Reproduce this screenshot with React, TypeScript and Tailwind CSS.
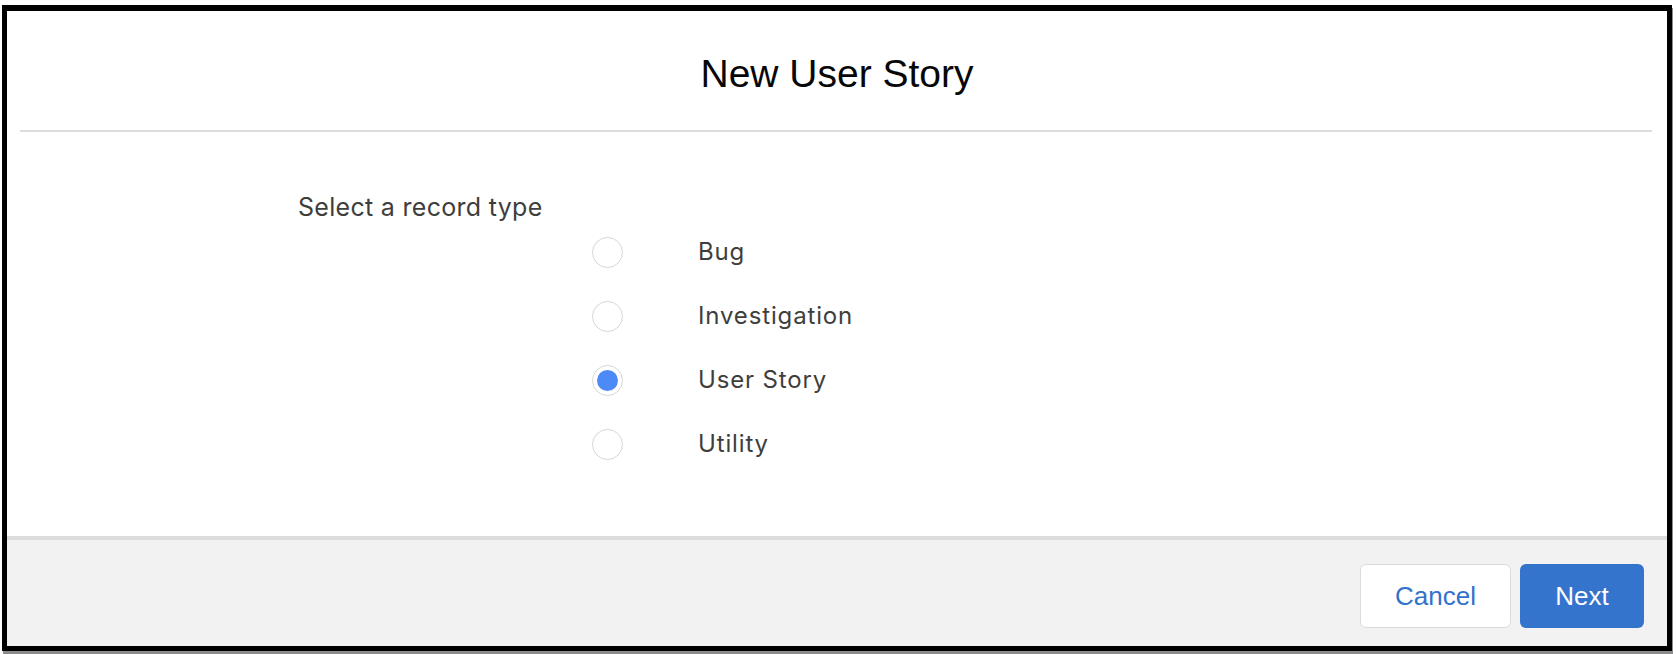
import React from "react";

const options = [
  { label: "Bug", checked: false },
  { label: "Investigation", checked: false },
  { label: "User Story", checked: true },
  { label: "Utility", checked: false },
];

export default function App() {
  return (
    <div className="w-[1676px] h-[654px] bg-white overflow-hidden">
      <div className="ml-[2px] mt-[5px] w-[1670px] h-[646px] border-black border-l-[5px] border-r-[5px] border-t-[6px] border-b-[5px] flex flex-col bg-white shadow-[1px_3px_0_#8c8c8c]">
        {/* Header */}
        <div className="pt-[41px] pb-[34px] flex justify-center">
          <h1 className="text-[39px] leading-[44px] text-[#080707] font-['Liberation_Sans',Arial,sans-serif] font-normal">
            New User Story
          </h1>
        </div>
        <div className="ml-[13px] mr-[15px] h-[2px] bg-[#dcdcdc]" />

        {/* Body */}
        <div className="flex-1 pl-[291px] pt-[63px] font-['Inter','Liberation_Sans',sans-serif] text-[#3e3e3c]">
          <div className="text-[25px] leading-[24px] tracking-[0.3px]">Select a record type</div>
          <div className="mt-[1px] ml-[294px] flex flex-col">
            {options.map((o) => (
              <label key={o.label} className="h-[64px] flex items-center">
                <span className="w-[31px] h-[31px] rounded-full border-[1.5px] border-[#d6d6d6] bg-white flex items-center justify-center shrink-0">
                  {o.checked && <span className="w-[21px] h-[21px] rounded-full bg-[#4d8af5]" />}
                </span>
                <span className="ml-[75px] text-[24px] leading-[30px] tracking-[0.85px]">{o.label}</span>
              </label>
            ))}
          </div>
        </div>

        {/* Footer */}
        <div className="h-[110px] border-t-[4px] border-[#dcdcdc] bg-[#f2f2f2] flex justify-end items-start pt-[24px] pr-[23px] gap-[9px] font-['Liberation_Sans',Arial,sans-serif]">
          <button className="w-[151px] h-[64px] rounded-[6px] border-[1.5px] border-[#dddbda] bg-white text-[#3172cc] text-[26px] flex items-center justify-center">
            Cancel
          </button>
          <button className="w-[124px] h-[64px] rounded-[6px] bg-[#3474cd] text-white text-[26px] flex items-center justify-center">
            Next
          </button>
        </div>
      </div>
    </div>
  );
}
